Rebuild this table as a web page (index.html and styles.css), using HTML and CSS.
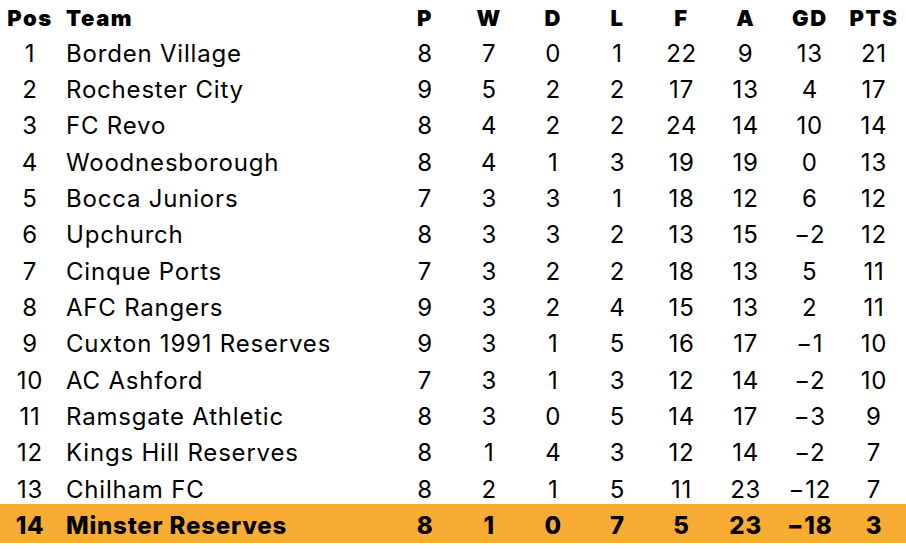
FILE: index.html
```html
<!DOCTYPE html>
<html lang="en">
<head>
<meta charset="utf-8">
<title>League Table</title>
<link rel="stylesheet" href="styles.css">
</head>
<body>
<div class="table">
  <div class="row head">
    <span class="pos">Pos</span><span class="team">Team</span>
    <span>P</span><span>W</span><span>D</span><span>L</span><span>F</span><span>A</span><span>GD</span><span>PTS</span>
  </div>
  <div class="row"><span class="pos">1</span><span class="team">Borden Village</span><span>8</span><span>7</span><span>0</span><span>1</span><span>22</span><span>9</span><span>13</span><span>21</span></div>
  <div class="row"><span class="pos">2</span><span class="team">Rochester City</span><span>9</span><span>5</span><span>2</span><span>2</span><span>17</span><span>13</span><span>4</span><span>17</span></div>
  <div class="row"><span class="pos">3</span><span class="team">FC Revo</span><span>8</span><span>4</span><span>2</span><span>2</span><span>24</span><span>14</span><span>10</span><span>14</span></div>
  <div class="row"><span class="pos">4</span><span class="team">Woodnesborough</span><span>8</span><span>4</span><span>1</span><span>3</span><span>19</span><span>19</span><span>0</span><span>13</span></div>
  <div class="row"><span class="pos">5</span><span class="team">Bocca Juniors</span><span>7</span><span>3</span><span>3</span><span>1</span><span>18</span><span>12</span><span>6</span><span>12</span></div>
  <div class="row"><span class="pos">6</span><span class="team">Upchurch</span><span>8</span><span>3</span><span>3</span><span>2</span><span>13</span><span>15</span><span>−2</span><span>12</span></div>
  <div class="row"><span class="pos">7</span><span class="team">Cinque Ports</span><span>7</span><span>3</span><span>2</span><span>2</span><span>18</span><span>13</span><span>5</span><span>11</span></div>
  <div class="row"><span class="pos">8</span><span class="team">AFC Rangers</span><span>9</span><span>3</span><span>2</span><span>4</span><span>15</span><span>13</span><span>2</span><span>11</span></div>
  <div class="row"><span class="pos">9</span><span class="team">Cuxton 1991 Reserves</span><span>9</span><span>3</span><span>1</span><span>5</span><span>16</span><span>17</span><span>−1</span><span>10</span></div>
  <div class="row"><span class="pos">10</span><span class="team">AC Ashford</span><span>7</span><span>3</span><span>1</span><span>3</span><span>12</span><span>14</span><span>−2</span><span>10</span></div>
  <div class="row"><span class="pos">11</span><span class="team">Ramsgate Athletic</span><span>8</span><span>3</span><span>0</span><span>5</span><span>14</span><span>17</span><span>−3</span><span>9</span></div>
  <div class="row"><span class="pos">12</span><span class="team">Kings Hill Reserves</span><span>8</span><span>1</span><span>4</span><span>3</span><span>12</span><span>14</span><span>−2</span><span>7</span></div>
  <div class="row"><span class="pos">13</span><span class="team">Chilham FC</span><span>8</span><span>2</span><span>1</span><span>5</span><span>11</span><span>23</span><span>−12</span><span>7</span></div>
  <div class="row current"><span class="pos">14</span><span class="team">Minster Reserves</span><span>8</span><span>1</span><span>0</span><span>7</span><span>5</span><span>23</span><span>−18</span><span>3</span></div>
</div>
</body>
</html>
```
FILE: styles.css
```css
html, body {
  margin: 0;
  padding: 0;
  background: #ffffff;
}
body {
  font-family: "Inter", "Open Sans", sans-serif;
  color: #000000;
}
.table {
  width: 906px;
}
.row {
  display: grid;
  grid-template-columns: 60px 1fr repeat(8, 64.125px);
  align-items: center;
  height: 36.33px;
  font-size: 24px;
  font-weight: 400;
  letter-spacing: 0.8px;
}
.row span {
  text-align: center;
  white-space: nowrap;
}
.row .team {
  text-align: left;
  padding-left: 6px;
}
.head {
  height: 35px;
  font-size: 22px;
  font-weight: 900;
  letter-spacing: 1.6px;
}
.current {
  height: 39px;
  margin-top: -3px;
  padding-top: 4px;
  box-sizing: border-box;
  background: #f9ac33;
  font-weight: 800;
  letter-spacing: 0.8px;
}
```
